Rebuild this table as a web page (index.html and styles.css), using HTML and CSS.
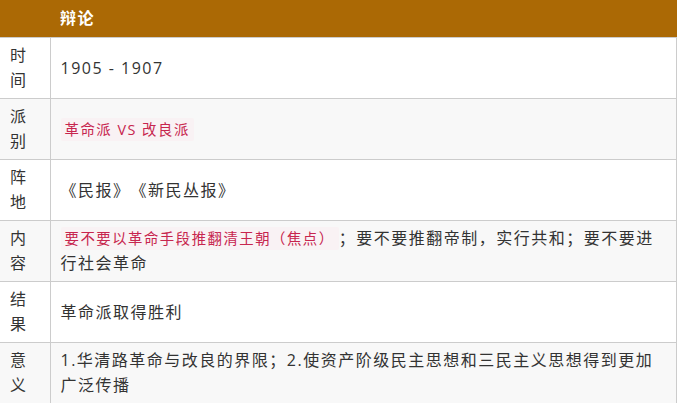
FILE: index.html
```html
<!DOCTYPE html>
<html lang="zh-CN">
<head>
  <meta charset="UTF-8" />
  <meta name="viewport" content="width=device-width, initial-scale=1.0" />
  <title>辩论</title>
  <link rel="stylesheet" href="styles.css">
</head>
<body>
  <table class="debate">
    <colgroup>
      <col class="col-label">
      <col>
    </colgroup>
    <thead>
      <tr>
        <th></th>
        <th>辩论</th>
      </tr>
    </thead>
    <tbody>
      <tr>
        <td class="label">时间</td>
        <td>1905 - 1907</td>
      </tr>
      <tr>
        <td class="label">派别</td>
        <td><code>革命派 VS 改良派</code></td>
      </tr>
      <tr>
        <td class="label">阵地</td>
        <td>《民报》《新民丛报》</td>
      </tr>
      <tr>
        <td class="label">内容</td>
        <td><code>要不要以革命手段推翻清王朝（焦点）</code>；要不要推翻帝制，实行共和；要不要进行社会革命</td>
      </tr>
      <tr>
        <td class="label">结果</td>
        <td>革命派取得胜利</td>
      </tr>
      <tr>
        <td class="label">意义</td>
        <td>1.华清路革命与改良的界限；2.使资产阶级民主思想和三民主义思想得到更加广泛传播</td>
      </tr>
    </tbody>
  </table>
</body>
</html>
```

FILE: styles.css
```css
body {
  margin: 0;
  background-color: #fff;
  color: #333;
  font-family: 'Open Sans', 'Noto Sans CJK SC', sans-serif;
  font-size: 16px;
  letter-spacing: 1.5px;
  text-spacing-trim: space-all;
}
.debate {
  width: 677px;
  table-layout: fixed;
  border-collapse: collapse;
}
.col-label {
  width: 50px;
}
.debate th {
  background-color: #ab6905;
  color: #fff;
  font-weight: bold;
  text-align: left;
  height: 37px;
  padding: 0 10px;
  line-height: 25px;
}
.debate td {
  border: 1px solid #ccc;
  padding: 5px 10px;
  line-height: 25px;
  vertical-align: middle;
  height: 50px;
}
.debate td.label {
  border-left: none;
}
.debate tbody tr:nth-child(even) td {
  background-color: #f8f8f8;
}
.debate tbody tr:last-child td {
  border-bottom: none;
}
code {
  font-family: inherit;
  font-size: 90%;
  color: #c7254e;
  background-color: #f9f2f4;
  padding: 2px 4px;
  border-radius: 2px;
}
```
